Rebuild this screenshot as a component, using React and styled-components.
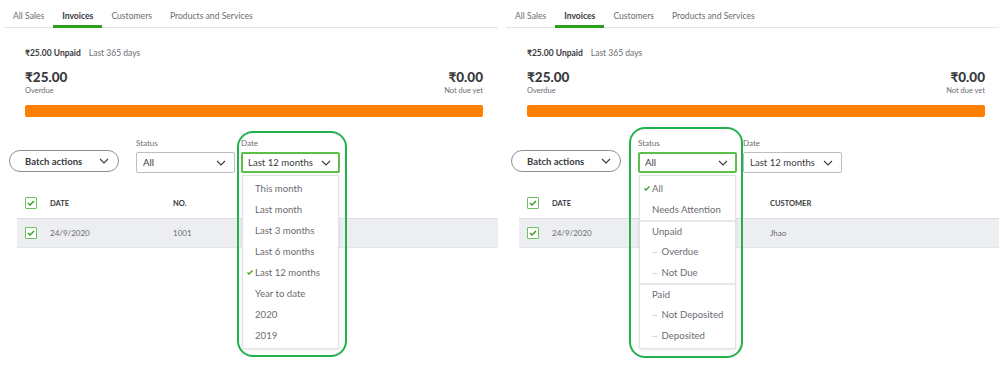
import React from "react";
import styled, { createGlobalStyle } from "styled-components";

const GlobalStyle = createGlobalStyle`
  html, body {
    margin: 0;
    padding: 0;
    background: #fff;
  }
  body {
    font-family: Lato, "Noto Sans", "DejaVu Sans", sans-serif;
    color: #393a3d;
  }
`;

const Page = styled.div`
  display: flex;
  gap: 8px;
  width: 999px;
  height: 369px;
  padding-left: 4px;
  box-sizing: border-box;
  overflow: hidden;
`;

const Panel = styled.section`
  flex: 0 0 494px;
  width: 494px;
`;

const TabBar = styled.nav`
  display: flex;
  height: 28px;
  box-sizing: border-box;
  border-bottom: 1px solid #e1e3e6;
`;

const Tab = styled.div`
  height: 28px;
  box-sizing: border-box;
  padding: 10px 9px 0;
  font-size: 8.6px;
  line-height: 12px;
  color: ${(p) => (p.$active ? "#393a3d" : "#6b6c72")};
  font-weight: ${(p) => (p.$active ? 700 : 400)};
  box-shadow: ${(p) => (p.$active ? "inset 0 -3px 0 #2ca01c" : "none")};
`;

const Summary = styled.div`
  padding: 19px 15px 0 21px;
`;

const UnpaidLine = styled.div`
  display: flex;
  gap: 8px;
  font-size: 8.5px;
  line-height: 12px;
`;

const Strong = styled.span`
  font-weight: 700;
`;

const Muted = styled.span`
  color: #6b6c72;
`;

const Amounts = styled.div`
  display: flex;
  justify-content: space-between;
  margin-top: 9px;
`;

const Amount = styled.div`
  text-align: ${(p) => (p.$right ? "right" : "left")};
`;

const Big = styled.div`
  font-size: 13.5px;
  font-weight: 900;
  line-height: 18px;
`;

const Caption = styled.div`
  font-size: 7.5px;
  line-height: 10px;
  color: #6b6c72;
`;

const Bar = styled.div`
  margin-top: 9px;
  height: 12px;
  border-radius: 2px;
  background: #ff8000;
`;

const Controls = styled.div`
  display: flex;
  align-items: flex-end;
  margin-top: 21px;
  padding-left: 5px;
`;

const BatchButton = styled.button`
  width: 110px;
  height: 22px;
  margin: 0 17px 1px 0;
  padding: 0 9px 0 15px;
  box-sizing: border-box;
  display: flex;
  align-items: center;
  justify-content: space-between;
  border: 1px solid #8d9096;
  border-radius: 11px;
  background: #fff;
  font-family: inherit;
  font-size: 9.5px;
  font-weight: 700;
  color: #393a3d;
`;

const FilterGroup = styled.div`
  position: relative;
  width: 99px;
  margin-right: 6px;
`;

const Label = styled.div`
  margin-bottom: 4px;
  font-size: 8px;
  line-height: 10px;
  color: #6b6c72;
`;

const Select = styled.div`
  height: 21px;
  box-sizing: border-box;
  display: flex;
  align-items: center;
  justify-content: space-between;
  padding: ${(p) => (p.$focused ? "0 7px 0 5px" : "0 8px 0 6px")};
  border: ${(p) => (p.$focused ? "2px solid #5cbf47" : "1px solid #babec5")};
  border-radius: 2px;
  font-size: 9.6px;
  color: #393a3d;
`;

const Menu = styled.div`
  position: absolute;
  top: calc(100% + 2px);
  left: 1px;
  right: 1px;
  z-index: 2;
  padding: 2px 0;
  background: #fff;
  border: 1px solid #e0e2e5;
  box-shadow: 0 1px 3px rgba(0, 0, 0, 0.1);
`;

const MenuItem = styled.div`
  position: relative;
  height: 21px;
  box-sizing: border-box;
  display: flex;
  align-items: center;
  gap: 4px;
  padding-left: 12px;
  font-size: 9.6px;
  color: #6b6c72;
  border-top: ${(p) => (p.$divider ? "2px solid #e6e7ea" : "none")};
`;

const Dash = styled.span`
  color: #b5b7bc;
  font-size: 7px;
`;

const Tick = styled.svg`
  position: absolute;
  left: 4px;
  top: 8px;
`;

const Highlight = styled.div`
  position: absolute;
  left: ${(p) => p.$left}px;
  top: ${(p) => p.$top}px;
  width: ${(p) => p.$width}px;
  height: ${(p) => p.$height}px;
  box-sizing: border-box;
  border: 2px solid #22b14c;
  border-radius: 16px;
  pointer-events: none;
  z-index: 3;
`;

const Table = styled.div`
  margin: 15px 0 0 13px;
`;

const Row = styled.div`
  display: grid;
  grid-template-columns: 25px 123px 95px 1fr;
  align-items: center;
  height: 30px;
  box-sizing: border-box;
  padding-left: 8px;
  background: ${(p) => (p.$body ? "#eceef1" : "transparent")};
  border-top: ${(p) => (p.$body ? "1px solid #dcdee2" : "none")};
  border-bottom: ${(p) => (p.$body ? "1px solid #e3e5e8" : "none")};
`;

const HeadCell = styled.div`
  font-size: 7.5px;
  font-weight: 700;
  text-transform: uppercase;
  color: #393a3d;
`;

const Cell = styled.div`
  font-size: 8px;
  color: #6b6c72;
`;

const Box = styled.div`
  width: 12px;
  height: 12px;
  box-sizing: border-box;
  display: flex;
  align-items: center;
  justify-content: center;
  border: 1px solid #6cc25c;
  border-radius: 1px;
  background: #fff;
`;

const Chevron = () => (
  <svg width="10" height="6" viewBox="0 0 10 6">
    <polyline points="1,1 5,5 9,1" fill="none" stroke="#393a3d" strokeWidth="1.1" />
  </svg>
);

const Check = () => (
  <svg width="8" height="6" viewBox="0 0 8 6">
    <polyline points="1,3 3,5 7,1" fill="none" stroke="#2ca01c" strokeWidth="1.4" />
  </svg>
);

const TickMark = () => (
  <Tick width="6" height="5" viewBox="0 0 6 5">
    <polyline points="0.5,2.5 2,4 5.5,0.5" fill="none" stroke="#2ca01c" strokeWidth="1.3" />
  </Tick>
);

const tabs = ["All Sales", "Invoices", "Customers", "Products and Services"];

const dateOptions = [
  "This month",
  "Last month",
  "Last 3 months",
  "Last 6 months",
  "Last 12 months",
  "Year to date",
  "2020",
  "2019",
];

const statusOptions = [
  { label: "All", checked: true },
  { label: "Needs Attention" },
  { label: "Unpaid", divider: true },
  { label: "Overdue", sub: true },
  { label: "Not Due", sub: true },
  { label: "Paid", divider: true },
  { label: "Not Deposited", sub: true },
  { label: "Deposited", sub: true },
];

const columns = [
  { key: "date", title: "Date", value: "24/9/2020" },
  { key: "no", title: "No.", value: "1001" },
  { key: "customer", title: "Customer", value: "Jhao" },
];

// the open menu covers one column in each shot
const coveredBy = { date: "customer", status: "no" };

function InvoicePanel({ open }) {
  const covered = coveredBy[open];
  return (
    <Panel>
      <TabBar>
        {tabs.map((t) => (
          <Tab key={t} $active={t === "Invoices"}>
            {t}
          </Tab>
        ))}
      </TabBar>

      <Summary>
        <UnpaidLine>
          <Strong>₹25.00 Unpaid</Strong>
          <Muted>Last 365 days</Muted>
        </UnpaidLine>
        <Amounts>
          <Amount>
            <Big>₹25.00</Big>
            <Caption>Overdue</Caption>
          </Amount>
          <Amount $right>
            <Big>₹0.00</Big>
            <Caption>Not due yet</Caption>
          </Amount>
        </Amounts>
        <Bar />
      </Summary>

      <Controls>
        <BatchButton>
          Batch actions
          <Chevron />
        </BatchButton>

        <FilterGroup>
          {open === "status" && (
            <Highlight $left={-9} $top={-11} $width={114} $height={231} />
          )}
          <Label>Status</Label>
          <Select $focused={open === "status"}>
            All
            <Chevron />
          </Select>
          {open === "status" && (
            <Menu>
              {statusOptions.map((o) => (
                <MenuItem key={o.label} $divider={o.divider}>
                  {o.checked && <TickMark />}
                  {o.sub && <Dash>—</Dash>}
                  {o.label}
                </MenuItem>
              ))}
            </Menu>
          )}
        </FilterGroup>

        <FilterGroup>
          {open === "date" && (
            <Highlight $left={-4} $top={-7} $width={110} $height={226} />
          )}
          <Label>Date</Label>
          <Select $focused={open === "date"}>
            Last 12 months
            <Chevron />
          </Select>
          {open === "date" && (
            <Menu>
              {dateOptions.map((o) => (
                <MenuItem key={o}>
                  {o === "Last 12 months" && <TickMark />}
                  {o}
                </MenuItem>
              ))}
            </Menu>
          )}
        </FilterGroup>
      </Controls>

      <Table>
        <Row>
          <Box>
            <Check />
          </Box>
          {columns.map((c) => (
            <HeadCell key={c.key}>{c.key === covered ? null : c.title}</HeadCell>
          ))}
        </Row>
        <Row $body>
          <Box>
            <Check />
          </Box>
          {columns.map((c) => (
            <Cell key={c.key}>{c.key === covered ? null : c.value}</Cell>
          ))}
        </Row>
      </Table>
    </Panel>
  );
}

export default function App() {
  return (
    <>
      <GlobalStyle />
      <Page>
        <InvoicePanel open="date" />
        <InvoicePanel open="status" />
      </Page>
    </>
  );
}
